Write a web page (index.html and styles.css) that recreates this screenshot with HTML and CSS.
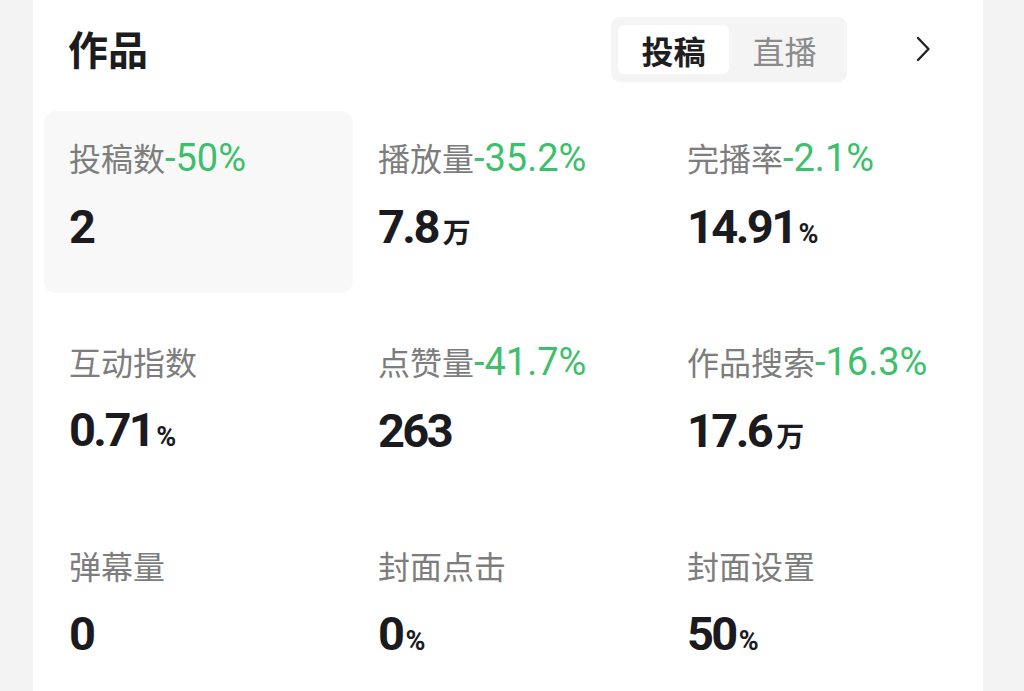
FILE: index.html
```html
<!DOCTYPE html>
<html lang="zh">
<head>
<meta charset="utf-8">
<link rel="stylesheet" href="styles.css">
</head>
<body>
<div class="card">
  <div class="header">
    <div class="title">作品</div>
    <div class="tabs">
      <div class="tab active">投稿</div>
      <div class="tab">直播</div>
    </div>
    <svg class="chev" width="20" height="28" viewBox="0 0 20 28"><path d="M5 3 L15.5 14 L5 25" fill="none" stroke="#222" stroke-width="2.4" stroke-linecap="round" stroke-linejoin="round"/></svg>
  </div>
  <div class="grid">
    <div class="cell selected">
      <div class="label">投稿数<span class="delta">-50%</span></div>
      <div class="value">2</div>
    </div>
    <div class="cell">
      <div class="label">播放量<span class="delta">-35.2%</span></div>
      <div class="value">7.8<span class="unit cjk">万</span></div>
    </div>
    <div class="cell">
      <div class="label">完播率<span class="delta">-2.1%</span></div>
      <div class="value">14.91<span class="unit">%</span></div>
    </div>
    <div class="cell">
      <div class="label">互动指数</div>
      <div class="value">0.71<span class="unit">%</span></div>
    </div>
    <div class="cell">
      <div class="label">点赞量<span class="delta">-41.7%</span></div>
      <div class="value">263</div>
    </div>
    <div class="cell">
      <div class="label">作品搜索<span class="delta">-16.3%</span></div>
      <div class="value">17.6<span class="unit cjk">万</span></div>
    </div>
    <div class="cell">
      <div class="label">弹幕量</div>
      <div class="value">0</div>
    </div>
    <div class="cell">
      <div class="label">封面点击</div>
      <div class="value">0<span class="unit">%</span></div>
    </div>
    <div class="cell">
      <div class="label">封面设置</div>
      <div class="value">50<span class="unit">%</span></div>
    </div>
  </div>
</div>
</body>
</html>
```
FILE: styles.css
```css
html, body {
  margin: 0;
  padding: 0;
}
body {
  background: #f3f3f3;
  width: 1024px;
  height: 691px;
  overflow: hidden;
  font-family: "Noto Sans CJK SC", "Noto Sans", sans-serif;
}
.card {
  margin-left: 33px;
  width: 950px;
  height: 691px;
  background: #ffffff;
}
.header {
  display: flex;
  align-items: center;
  height: 98px;
  padding-left: 35px;
  box-sizing: border-box;
}
.title {
  font-size: 40px;
  font-weight: 700;
  color: #1c1c1e;
  line-height: 50px;
  flex: 1;
  margin-top: -2px;
}
.tabs {
  display: flex;
  background: #f4f4f5;
  border-radius: 9px;
  padding: 8px 7px;
  width: 236px;
  box-sizing: border-box;
  height: 65px;
  margin-top: 1px;
}
.tab {
  width: 111px;
  height: 49px;
  border-radius: 6px;
  display: flex;
  align-items: center;
  justify-content: center;
  font-size: 32px;
  color: #8a8a8a;
  line-height: 1;
}
.tab.active {
  background: #ffffff;
  color: #1e1e1e;
  font-weight: 700;
}
.chev {
  margin-left: 66px;
  margin-right: 50px;
}
.grid {
  display: grid;
  grid-template-columns: repeat(3, 309px);
  grid-auto-rows: 182px;
  row-gap: 22px;
  margin-top: 13px;
  padding-left: 11px;
}
.cell {
  padding: 26px 0 0 25px;
  border-radius: 12px;
}
.cell.selected {
  background: #f8f8f8;
}
.label {
  font-size: 32px;
  line-height: 40px;
  color: #7d7d7d;
  white-space: nowrap;
}
.delta {
  font-family: Roboto, "Noto Sans", sans-serif;
  font-weight: 400;
  color: #3dbf6c;
  font-size: 38px;
}
.value {
  margin-top: 24px;
  font-family: Roboto, "Noto Sans", sans-serif;
  font-weight: 700;
  font-size: 47px;
  letter-spacing: -2.6px;
  line-height: 50px;
  color: #1a1a1f;
}
.unit {
  font-size: 27px;
  font-weight: 700;
  letter-spacing: 0;
  margin-left: 3px;
}
.unit.cjk {
  font-family: "Noto Sans CJK SC", sans-serif;
  font-size: 28px;
  margin-left: 5px;
}
```
